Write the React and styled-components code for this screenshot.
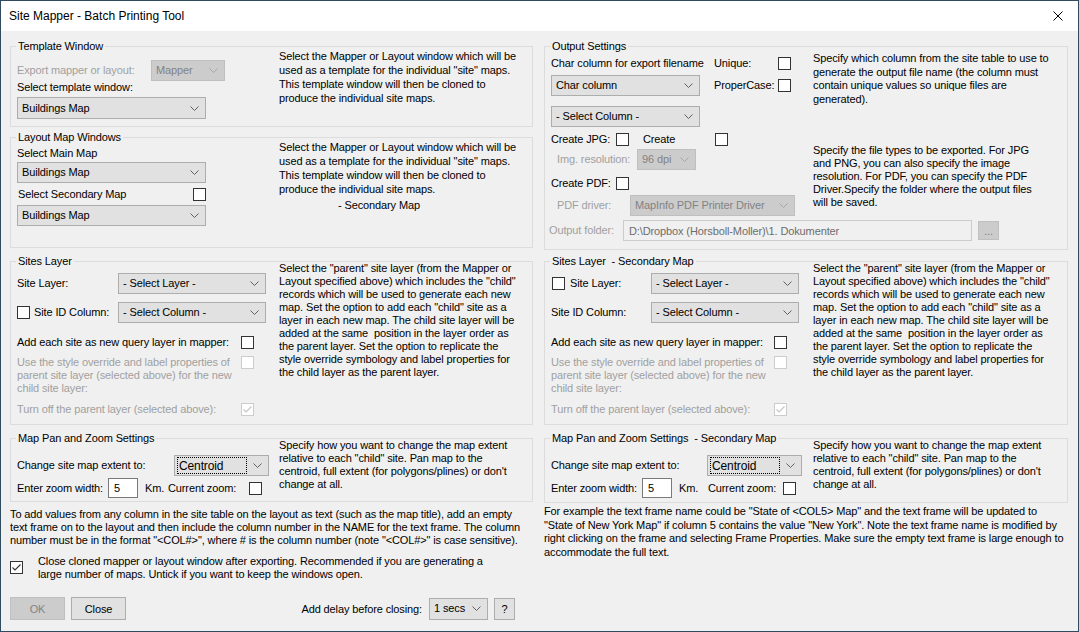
import styled, { createGlobalStyle } from "styled-components";

const GlobalStyle = createGlobalStyle`
  html, body {
    margin: 0;
    padding: 0;
    background: #f0f0f0;
  }
  body {
    font-family: "Liberation Sans", Arial, sans-serif;
    font-size: 11px;
    color: #000;
  }
`;

const Window = styled.div`
  width: 1079px;
  height: 632px;
  box-sizing: border-box;
  border: 1px solid #2f4b60;
  background: #f0f0f0;
  display: flex;
  flex-direction: column;
  overflow: hidden;
  letter-spacing: -0.12px;
`;

const TitleBar = styled.div`
  height: 30px;
  flex-shrink: 0;
  background: #fff;
  display: flex;
  align-items: center;
  justify-content: space-between;
  padding-left: 8px;
`;

const Title = styled.span`
  font-size: 12px;
  letter-spacing: 0;
`;

const CloseButton = styled.div`
  width: 40px;
  height: 30px;
  display: flex;
  align-items: center;
  justify-content: center;
`;

const Body = styled.div`
  display: flex;
  gap: 11px;
  padding: 0 10px 0 9px;
`;

const Column = styled.div`
  width: ${(p) => p.$w}px;
  display: flex;
  flex-direction: column;
  padding-top: 15px;
`;

const Group = styled.div`
  position: relative;
  box-sizing: border-box;
  height: ${(p) => p.$h}px;
  margin-top: ${(p) => p.$mt || 0}px;
  border: 1px solid #dcdcdc;
  padding-left: 6px;
  display: grid;
  grid-template-columns: 262px 1fr;
  align-content: start;
`;

const Legend = styled.span`
  position: absolute;
  top: -7px;
  left: 5px;
  padding: 0 2px;
  line-height: 13px;
  background: #f0f0f0;
  white-space: pre;
`;

const Controls = styled.div`
  display: flex;
  flex-direction: column;
  align-items: flex-start;
  padding-top: ${(p) => p.$pt || 0}px;
`;

const Desc = styled.div`
  padding-top: ${(p) => p.$pt || 0}px;
  margin-top: ${(p) => p.$mt || 0}px;
  line-height: ${(p) => p.$lh || 13}px;
  white-space: pre;
`;

const SubNote = styled.div`
  margin-top: 3px;
  padding-left: 59px;
  line-height: 13px;
`;

const Row = styled.div`
  display: flex;
  align-items: ${(p) => (p.$top ? "flex-start" : "center")};
  justify-content: ${(p) => (p.$between ? "space-between" : "flex-start")};
  width: ${(p) => (p.$w ? `${p.$w}px` : "auto")};
  margin-top: ${(p) => p.$mt || 0}px;
  margin-left: ${(p) => p.$ml || 0}px;
  padding-left: ${(p) => p.$pl || 0}px;
  grid-column: ${(p) => (p.$full ? "1 / -1" : "auto")};
`;

const Label = styled.span`
  flex-shrink: 0;
  line-height: 13px;
  white-space: pre;
  width: ${(p) => (p.$w ? `${p.$w}px` : "auto")};
  margin-left: ${(p) => p.$ml || 0}px;
  color: ${(p) => (p.$disabled ? "#a0a0a0" : "#000")};
`;

const ComboBox = styled.div`
  flex-shrink: 0;
  box-sizing: border-box;
  width: ${(p) => p.$w}px;
  height: ${(p) => p.$h || 21}px;
  margin-top: ${(p) => p.$mt || 0}px;
  border: 1px solid ${(p) => (p.$disabled ? "#bfbfbf" : "#adadad")};
  background: ${(p) => (p.$disabled ? "#cccccc" : "#e1e1e1")};
  color: ${(p) => (p.$disabled ? "#838383" : "#000")};
  display: flex;
  align-items: center;
  padding: 0 6px 0 4px;
  white-space: pre;
`;

const ComboText = styled.span`
  flex: 1;
  line-height: 13px;
`;

const FocusText = styled.span`
  flex: 1;
  box-sizing: border-box;
  height: 17px;
  margin: 0 6px 0 -2px;
  padding-left: 1px;
  border: 1px dotted #000;
  display: flex;
  align-items: center;
  font-size: 12px;
`;

const CheckBox = styled.span`
  flex-shrink: 0;
  box-sizing: border-box;
  width: 13px;
  height: 13px;
  margin-left: ${(p) => p.$ml || 0}px;
  border: 1px solid ${(p) => (p.$disabled ? "#cccccc" : "#333333")};
  background: #fff;
  display: inline-flex;
  align-items: center;
  justify-content: center;
`;

const TextField = styled.div`
  flex-shrink: 0;
  box-sizing: border-box;
  width: ${(p) => p.$w}px;
  height: ${(p) => p.$h || 20}px;
  border: 1px solid ${(p) => (p.$disabled ? "#cccccc" : "#7a7a7a")};
  background: ${(p) => (p.$disabled ? "#f0f0f0" : "#fff")};
  color: ${(p) => (p.$disabled ? "#6d6d6d" : "#000")};
  display: flex;
  align-items: center;
  padding-left: 5px;
  white-space: pre;
`;

const Button = styled.div`
  flex-shrink: 0;
  box-sizing: border-box;
  width: ${(p) => p.$w}px;
  height: ${(p) => p.$h || 23}px;
  margin-left: ${(p) => p.$ml || 0}px;
  border: 1px solid ${(p) => (p.$disabled ? "#bfbfbf" : "#adadad")};
  background: ${(p) => (p.$disabled ? "#cccccc" : "#e1e1e1")};
  color: ${(p) => (p.$disabled ? "#838383" : "#000")};
  display: flex;
  align-items: center;
  justify-content: center;
`;

const Paragraph = styled.div`
  margin-top: ${(p) => p.$mt || 0}px;
  line-height: ${(p) => p.$lh || 13}px;
  white-space: pre;
`;

const CheckRow = styled.div`
  display: flex;
  align-items: flex-start;
  gap: 15px;
  margin-top: 8px;
  line-height: 13px;
  white-space: pre;
  & > span:first-child {
    margin-top: 6px;
  }
`;

const ButtonRow = styled.div`
  display: flex;
  align-items: center;
  margin-top: 16px;
  padding-right: 18px;
`;

const DelayLabel = styled.span`
  margin-left: auto;
  margin-right: 7px;
  white-space: pre;
`;

function Chevron({ color = "#606060" }) {
  return (
    <svg width="9" height="5" viewBox="0 0 9 5">
      <polyline points="0.5,0.5 4.5,4.5 8.5,0.5" fill="none" stroke={color} strokeWidth="1" />
    </svg>
  );
}

function Dropdown({ w, h, mt, disabled, focus, children }) {
  return (
    <ComboBox $w={w} $h={h} $mt={mt} $disabled={disabled}>
      {focus ? <FocusText>{children}</FocusText> : <ComboText>{children}</ComboText>}
      <Chevron color={disabled ? "#a6a6a6" : "#606060"} />
    </ComboBox>
  );
}

function Check({ checked, disabled, ml }) {
  return (
    <CheckBox $disabled={disabled} $ml={ml}>
      {checked && (
        <svg width="11" height="11" viewBox="0 0 11 11">
          <polyline
            points="1.5,5.5 4,8 9.5,2.5"
            fill="none"
            stroke={disabled ? "#c4c4c4" : "#333"}
            strokeWidth="1.1"
          />
        </svg>
      )}
    </CheckBox>
  );
}

const Lines = ({ lines }) => lines.map((l, i) => <div key={i}>{l}</div>);

const templateText = [
  "Select the Mapper or Layout window which will be",
  'used as a template for the individual "site" maps.',
  "This template window will then be cloned to",
  "produce the individual site maps.",
];

const sitesText = [
  'Select the "parent" site layer (from the Mapper or',
  'Layout specified above) which includes the "child"',
  "records which will be used to generate each new",
  'map. Set the option to add each "child" site as a',
  "layer in each new map. The child site layer will be",
  "added at the same  position in the layer order as",
  "the parent layer. Set the option to replicate the",
  "style override symbology and label properties for",
  "the child layer as the parent layer.",
];

const panText = [
  "Specify how you want to change the map extent",
  'relative to each "child" site. Pan map to the',
  "centroid, full extent (for polygons/plines) or don't",
  "change at all.",
];

const outputText = [
  "Specify which column from the site table to use to",
  "generate the output file name (the column must",
  "contain unique values so unique files are",
  "generated).",
];

const typesText = [
  "Specify the file types to be exported. For JPG",
  "and PNG, you can also specify the image",
  "resolution. For PDF, you can specify the PDF",
  "Driver.Specify the folder where the output files",
  "will be saved.",
];

const leftNote = [
  "To add values from any column in the site table on the layout as text (such as the map title), add an empty",
  "text frame on to the layout and then include the column number in the NAME for the text frame. The column",
  'number must be in the format "<COL#>", where # is the column number (note "<COL#>" is case sensitive).',
];

const closeNote = [
  "Close cloned mapper or layout window after exporting. Recommended if you are generating a",
  "large number of maps. Untick if you want to keep the windows open.",
];

const rightNote = [
  'For example the text frame name could be "State of <COL5> Map" and the text frame will be updated to',
  '"State of New York Map" if column 5 contains the value "New York". Note the text frame name is modified by',
  "right clicking on the frame and selecting Frame Properties. Make sure the empty text frame is large enough to",
  "accommodate the full text.",
];

function SitesGroup({ title, secondary, mt, checkAt }) {
  return (
    <Group $h={164} $mt={mt}>
      <Legend>{title}</Legend>
      <Controls $pt={11}>
        <Row>
          {secondary ? (
            <>
              <Check ml={1} />
              <Label $w={81} $ml={5}>Site Layer:</Label>
            </>
          ) : (
            <Label $w={101}>Site Layer:</Label>
          )}
          <Dropdown w={148}>- Select Layer -</Dropdown>
        </Row>
        <Row $mt={8}>
          {secondary ? (
            <Label $w={100}>Site ID Column:</Label>
          ) : (
            <>
              <Check />
              <Label $w={84} $ml={4}>Site ID Column:</Label>
            </>
          )}
          <Dropdown w={148}>- Select Column -</Dropdown>
        </Row>
        <Row $mt={13}>
          <Label $w={checkAt}>Add each site as new query layer in mapper:</Label>
          <Check />
        </Row>
        <Row $mt={7} $top>
          <Label $w={checkAt} $disabled>
            <Lines
              lines={[
                "Use the style override and label properties of",
                "parent site layer (selected above) for the new",
                "child site layer:",
              ]}
            />
          </Label>
          <Check disabled />
        </Row>
        <Row $mt={8}>
          <Label $w={checkAt} $disabled>Turn off the parent layer (selected above):</Label>
          <Check checked disabled />
        </Row>
      </Controls>
      <Desc $pt={0}>
        <Lines lines={sitesText} />
      </Desc>
    </Group>
  );
}

function PanZoomGroup({ title, h, labelW, kmW, zoomW }) {
  return (
    <Group $h={h} $mt={13}>
      <Legend>{title}</Legend>
      <Controls $pt={16}>
        <Row>
          <Label $w={labelW}>Change site map extent to:</Label>
          <Dropdown w={95} focus>Centroid</Dropdown>
        </Row>
        <Row $mt={2}>
          <Label $w={91}>Enter zoom width:</Label>
          <TextField $w={30}>5</TextField>
          <Label $w={kmW} $ml={7}>Km.</Label>
          <Label $w={zoomW}>Current zoom:</Label>
          <Check />
        </Row>
      </Controls>
      <Desc $pt={0}>
        <Lines lines={panText} />
      </Desc>
    </Group>
  );
}

function OutputGroup() {
  return (
    <Group $h={204}>
      <Legend>Output Settings</Legend>
      <Controls $pt={10}>
        <Row>
          <Label $w={163}>Char column for export filename</Label>
          <Label $w={64}>Unique:</Label>
          <Check />
        </Row>
        <Row $mt={5}>
          <Dropdown w={149}>Char column</Dropdown>
          <Label $w={64} $ml={14}>ProperCase:</Label>
          <Check />
        </Row>
        <Dropdown w={149} mt={10}>- Select Column -</Dropdown>
        <Row $mt={6}>
          <Label $w={65}>Create JPG:</Label>
          <Check />
          <Label $w={72} $ml={14}>Create</Label>
          <Check />
        </Row>
        <Row $mt={3} $pl={6}>
          <Label $w={80} $disabled>Img. resolution:</Label>
          <Dropdown w={59} disabled>96 dpi</Dropdown>
        </Row>
        <Row $mt={7}>
          <Label $w={65}>Create PDF:</Label>
          <Check />
        </Row>
        <Row $mt={5} $pl={6}>
          <Label $w={73} $disabled>PDF driver:</Label>
          <Dropdown w={165} disabled>MapInfo PDF Printer Driver</Dropdown>
        </Row>
      </Controls>
      <div>
        <Desc $pt={5} $lh={13.5}>
          <Lines lines={outputText} />
        </Desc>
        <Desc $mt={38}>
          <Lines lines={typesText} />
        </Desc>
      </div>
      <Row $full $mt={4} $ml={-2}>
        <Label $w={74} $disabled>Output folder:</Label>
        <TextField $w={349} $h={21} $disabled>D:\Dropbox (Horsboll-Moller)\1. Dokumenter</TextField>
        <Button $w={21} $h={19} $ml={6} $disabled>...</Button>
      </Row>
    </Group>
  );
}

export default function App() {
  return (
    <>
      <GlobalStyle />
      <Window>
        <TitleBar>
          <Title>Site Mapper - Batch Printing Tool</Title>
          <CloseButton>
            <svg width="10" height="10" viewBox="0 0 10 10">
              <path d="M0.5 0.5 L9.5 9.5 M9.5 0.5 L0.5 9.5" stroke="#000" strokeWidth="1" />
            </svg>
          </CloseButton>
        </TitleBar>
        <Body>
          <Column $w={523}>
            <Group $h={81}>
              <Legend>Template Window</Legend>
              <Controls $pt={13}>
                <Row>
                  <Label $w={134} $disabled>Export mapper or layout:</Label>
                  <Dropdown w={74} disabled>Mapper</Dropdown>
                </Row>
                <Label>Select template window:</Label>
                <Dropdown w={189} h={22} mt={3}>Buildings Map</Dropdown>
              </Controls>
              <Desc $pt={2} $lh={14}>
                <Lines lines={templateText} />
              </Desc>
            </Group>

            <Group $h={111} $mt={10}>
              <Legend>Layout Map Windows</Legend>
              <Controls $pt={9}>
                <Label>Select Main Map</Label>
                <Dropdown w={189} mt={2}>Buildings Map</Dropdown>
                <Row $mt={5} $w={189} $between>
                  <Label $ml={1}>Select Secondary Map</Label>
                  <Check />
                </Row>
                <Dropdown w={189} mt={4}>Buildings Map</Dropdown>
              </Controls>
              <Desc $pt={2} $lh={14}>
                <Lines lines={templateText} />
                <SubNote>- Secondary Map</SubNote>
              </Desc>
            </Group>

            <SitesGroup title="Sites Layer" mt={13} checkAt={224} />
            <PanZoomGroup title="Map Pan and Zoom Settings" h={64} labelW={157} kmW={23} zoomW={81} />

            <Paragraph $mt={6}>
              <Lines lines={leftNote} />
            </Paragraph>
            <CheckRow>
              <Check checked />
              <div>
                <Lines lines={closeNote} />
              </div>
            </CheckRow>
            <ButtonRow>
              <Button $w={55} $disabled>OK</Button>
              <Button $w={55} $ml={6}>Close</Button>
              <DelayLabel>Add delay before closing:</DelayLabel>
              <Dropdown w={59} h={22}>1 secs</Dropdown>
              <Button $w={21} $h={22} $ml={6}>?</Button>
            </ButtonRow>
          </Column>

          <Column $w={524}>
            <OutputGroup />
            <SitesGroup title="Sites Layer  - Secondary Map" secondary mt={11} checkAt={223} />
            <PanZoomGroup title="Map Pan and Zoom Settings  - Secondary Map" h={65} labelW={156} kmW={29} zoomW={75} />
            <Paragraph $mt={2} $lh={13.5}>
              <Lines lines={rightNote} />
            </Paragraph>
          </Column>
        </Body>
      </Window>
    </>
  );
}
